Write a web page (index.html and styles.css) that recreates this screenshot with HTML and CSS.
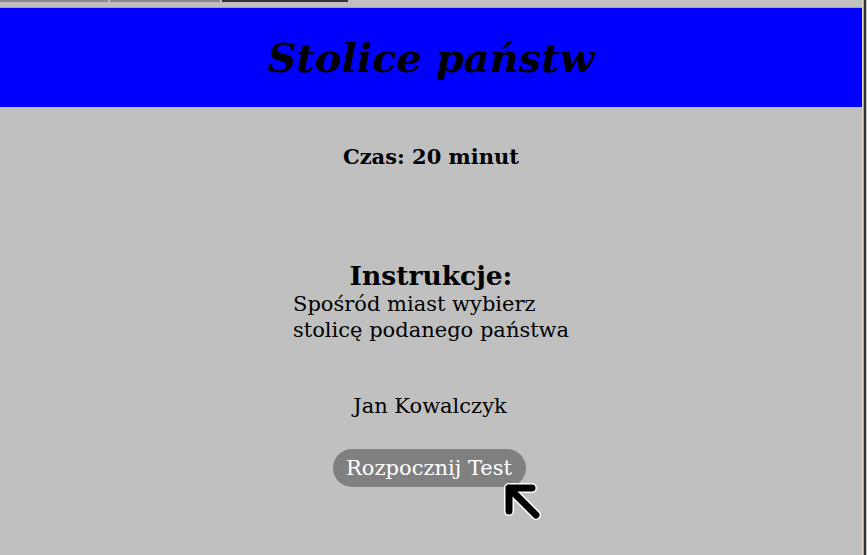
FILE: index.html
```html
<!DOCTYPE html>
<html lang="pl">
<head>
<meta charset="utf-8">
<title>Stolice państw</title>
<link rel="stylesheet" href="styles.css">
</head>
<body>
<div class="window">
  <div class="page">
    <div class="tabs">
      <span class="tab tab-a"></span>
      <span class="tab tab-b"></span>
      <span class="tab tab-c"></span>
    </div>
    <div class="topline"></div>
    <header class="banner">
      <h1 class="title">Stolice państw</h1>
    </header>
    <main class="content">
      <h3 class="time">Czas: 20 minut</h3>
      <section class="instructions">
        <h2 class="instr-title">Instrukcje:</h2>
        <p class="instr-text">Spośród miast wybierz stolicę podanego państwa</p>
      </section>
      <p class="author">Jan Kowalczyk</p>
      <div class="start-wrap">
        <button class="start">Rozpocznij Test</button>
        <svg class="cursor" width="42" height="42" viewBox="0 0 42 42">
          <g fill="none" stroke-linecap="round" stroke-linejoin="round">
            <path d="M30 6 L7 6 L7 29 M7 6 L34 33" stroke="#fff" stroke-width="10"/>
            <path d="M30 6 L7 6 L7 29 M7 6 L34 33" stroke="#000" stroke-width="7"/>
          </g>
        </svg>
      </div>
    </main>
  </div>
  <div class="frame">
    <span class="frame-light"></span>
    <span class="frame-mid"></span>
    <span class="frame-dark"></span>
    <span class="frame-edge"></span>
  </div>
</div>
</body>
</html>
```

FILE: styles.css
```css
html, body {
  margin: 0;
  padding: 0;
  height: 100%;
}
body {
  background: #c0c0c0;
  font-family: "DejaVu Serif", serif;
  color: #000;
  overflow: hidden;
}
.window {
  display: flex;
  height: 555px;
}
.page {
  width: 862px;
  display: flex;
  flex-direction: column;
}
.tabs {
  display: flex;
  gap: 2px;
  height: 2px;
}
.tab {
  display: block;
  height: 2px;
}
.tab-a { width: 108px; background: #888; }
.tab-b { width: 110px; background: #888; }
.tab-c { width: 126px; background: #333; }
.topline {
  height: 5px;
  border-bottom: 1px solid #a4a4a4;
}
.banner {
  height: 99px;
  background: #0000ff;
  display: flex;
  align-items: center;
  justify-content: center;
}
.title {
  margin: 0;
  font-size: 40px;
  font-weight: bold;
  font-style: italic;
  line-height: 1;
}
.content {
  display: flex;
  flex-direction: column;
  align-items: center;
}
.time {
  margin: 38px 0 0;
  font-size: 21px;
  font-weight: bold;
  line-height: 24px;
}
.instructions {
  margin-top: 91px;
  display: flex;
  flex-direction: column;
  align-items: center;
}
.instr-title {
  margin: 0;
  font-size: 26.5px;
  line-height: 31px;
}
.instr-text {
  margin: 0 0 0 8px;
  width: 284px;
  font-size: 21px;
  line-height: 26px;
  text-align: left;
}
.author {
  margin: 50px 2px 0 0;
  font-size: 21px;
  line-height: 26px;
}
.start-wrap {
  position: relative;
  margin: 30px 4px 0 0;
}
.start {
  display: block;
  background: #808080;
  color: #fff;
  border: none;
  border-radius: 19px;
  height: 38px;
  width: 193px;
  padding: 0;
  font-family: "DejaVu Serif", serif;
  font-size: 21px;
}
.cursor {
  position: absolute;
  left: 169px;
  top: 33px;
}
.frame {
  display: flex;
  width: 5px;
}
.frame span { display: block; width: 1px; }
.frame-light { background: #e0d8c8; }
.frame-mid { background: #a8a8a8; }
.frame-dark { background: #303030; width: 2px !important; }
.frame-edge { background: #c8c8c8; }
```
